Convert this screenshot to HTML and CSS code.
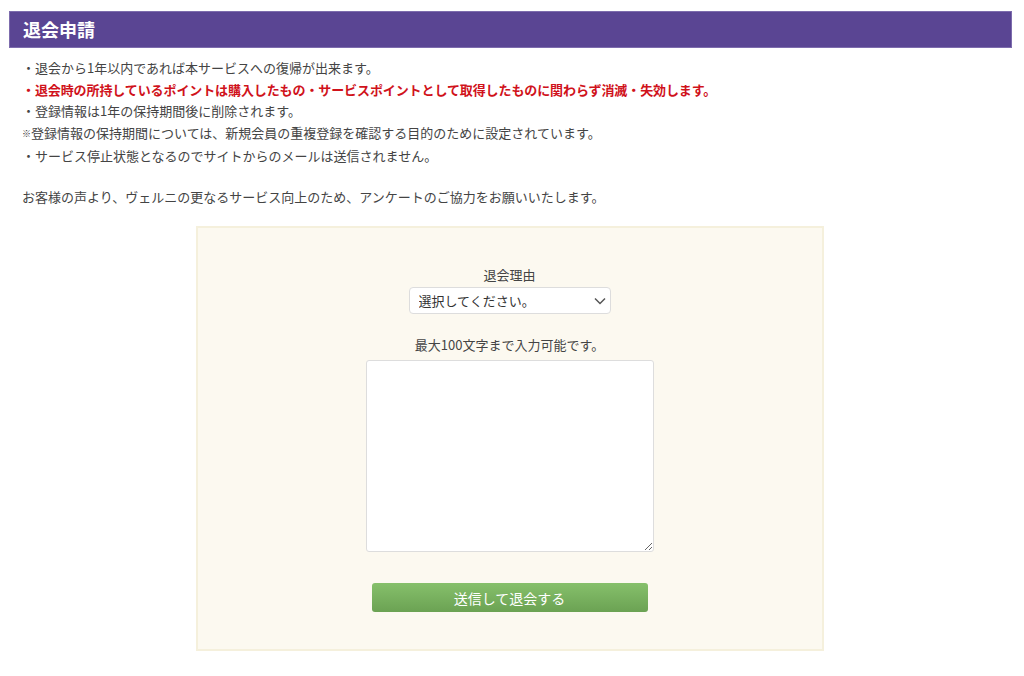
FILE: index.html
```html
<!DOCTYPE html>
<html lang="ja">
<head>
    <meta charset="UTF-8">
    <meta name="viewport" content="width=device-width, initial-scale=1.0">
    <title>退会申請</title>
    <link rel="stylesheet" href="styles.css">
</head>
<body>
    <h1 class="page-title">退会申請</h1>

    <div class="notice">
        <p>・退会から1年以内であれば本サービスへの復帰が出来ます。</p>
        <p class="warn">・退会時の所持しているポイントは購入したもの・サービスポイントとして取得したものに関わらず消滅・失効します。</p>
        <p>・登録情報は1年の保持期間後に削除されます。</p>
        <p><span class="kome">※</span>登録情報の保持期間については、新規会員の重複登録を確認する目的のために設定されています。</p>
        <p>・サービス停止状態となるのでサイトからのメールは送信されません。</p>
        <p class="request">お客様の声より、ヴェルニの更なるサービス向上のため、アンケートのご協力をお願いいたします。</p>
    </div>

    <form class="withdraw-box" onsubmit="return false;">
        <label class="field-label" for="reason">退会理由</label>
        <div class="select-wrap">
            <select id="reason">
                <option>選択してください。</option>
                <option>サービスを利用しなくなった</option>
                <option>その他</option>
            </select>
            <svg class="chevron" width="12" height="8" viewBox="0 0 12 8">
                <path d="M1 1.5 L6 6.5 L11 1.5" fill="none" stroke="#555" stroke-width="1.5"/>
            </svg>
        </div>

        <label class="field-label second" for="comment">最大100文字まで入力可能です。</label>
        <textarea id="comment" maxlength="100"></textarea>

        <button type="submit">送信して退会する</button>
    </form>
</body>
</html>
```

FILE: styles.css
```css
* {
    box-sizing: border-box;
}
body {
    margin: 0;
    padding: 11px 14px 40px 9px;
    background: #fff;
    color: #444;
    font-family: "Noto Sans CJK JP", "Liberation Sans", sans-serif;
    font-size: 13px;
}
.page-title {
    margin: 0 -2px 0 0;
    height: 37px;
    padding: 0 13px;
    background-color: #5a4593;
    border: 1px solid #7d6cad;
    color: #fff;
    font-size: 18px;
    font-weight: bold;
    line-height: 35px;
}
.notice {
    padding: 9px 13px 0;
}
.notice p {
    margin: 0;
    line-height: 21.7px;
}
.notice .warn {
    color: #d0121b;
    font-weight: bold;
    letter-spacing: -0.1px;
}
.notice .kome {
    font-size: 9px;
    color: #333;
    vertical-align: 1px;
}
.notice .request {
    margin-top: 19px;
}
.withdraw-box {
    width: 628px;
    margin: 19px auto 0;
    padding: 37px 0 37px;
    background-color: #fcf9f0;
    border: 2px solid #f5f0dc;
    display: flex;
    flex-direction: column;
    align-items: center;
}
.field-label {
    display: block;
    line-height: 20px;
    color: #444;
}
.field-label.second {
    margin-top: 21px;
}
.select-wrap {
    position: relative;
    margin-top: 2px;
}
select {
    appearance: none;
    -webkit-appearance: none;
    width: 202px;
    height: 27px;
    padding: 0 24px 0 9px;
    background: #fff;
    border: 1px solid #ddd;
    border-radius: 4px;
    color: #333;
    font-family: inherit;
    font-size: 13px;
    outline: none;
}
.chevron {
    position: absolute;
    right: 5px;
    top: 10px;
    pointer-events: none;
}
textarea {
    margin-top: 5px;
    width: 288px;
    height: 192px;
    background: #fff;
    border: 1px solid #ddd;
    border-radius: 3px;
    font-family: inherit;
    font-size: 13px;
    padding: 4px;
}
button {
    margin-top: 31px;
    width: 276px;
    height: 29px;
    background: linear-gradient(#86c06b 0%, #6ba253 100%);
    border: none;
    border-radius: 3px;
    color: #fff;
    font-family: inherit;
    font-size: 14px;
    cursor: pointer;
}
button:hover {
    opacity: 0.9;
}
```
